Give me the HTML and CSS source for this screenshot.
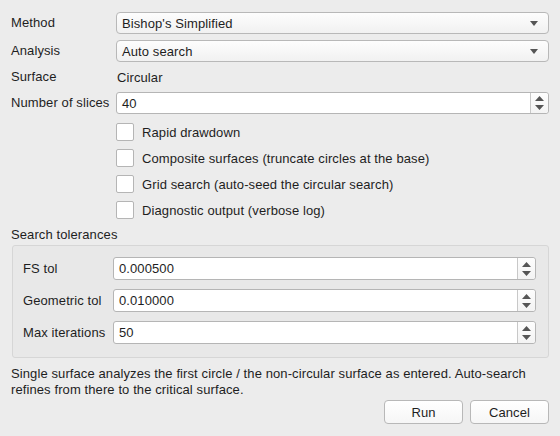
FILE: index.html
```html
<!DOCTYPE html>
<html lang="en">
<head>
    <meta charset="UTF-8">
    <title>Slope Stability Analysis</title>
    <link rel="stylesheet" href="styles.css">
</head>
<body>
    <div class="dialog">
        <div class="form">
            <label class="label">Method</label>
            <div class="combo">
                <span>Bishop's Simplified</span>
                <svg class="combo-arrow" width="8" height="5" viewBox="0 0 8 5"><path d="M0 0h8L4 5z" fill="#555"/></svg>
            </div>

            <label class="label">Analysis</label>
            <div class="combo">
                <span>Auto search</span>
                <svg class="combo-arrow" width="8" height="5" viewBox="0 0 8 5"><path d="M0 0h8L4 5z" fill="#555"/></svg>
            </div>

            <label class="label">Surface</label>
            <div class="value">Circular</div>

            <label class="label">Number of slices</label>
            <div class="spin">
                <span class="spin-text">40</span>
                <div class="spin-buttons">
                    <svg width="9" height="14" viewBox="0 0 9 14"><path d="M0 5L4.5 0L9 5z M0 9h9L4.5 14z" fill="#555"/></svg>
                </div>
            </div>
        </div>

        <div class="checks">
            <div class="check"><span class="box"></span>Rapid drawdown</div>
            <div class="check"><span class="box"></span>Composite surfaces (truncate circles at the base)</div>
            <div class="check"><span class="box"></span>Grid search (auto-seed the circular search)</div>
            <div class="check"><span class="box"></span>Diagnostic output (verbose log)</div>
        </div>

        <div class="group-title">Search tolerances</div>
        <div class="group">
            <label class="label">FS tol</label>
            <div class="spin">
                <span class="spin-text">0.000500</span>
                <div class="spin-buttons">
                    <svg width="9" height="14" viewBox="0 0 9 14"><path d="M0 5L4.5 0L9 5z M0 9h9L4.5 14z" fill="#555"/></svg>
                </div>
            </div>

            <label class="label">Geometric tol</label>
            <div class="spin">
                <span class="spin-text">0.010000</span>
                <div class="spin-buttons">
                    <svg width="9" height="14" viewBox="0 0 9 14"><path d="M0 5L4.5 0L9 5z M0 9h9L4.5 14z" fill="#555"/></svg>
                </div>
            </div>

            <label class="label">Max iterations</label>
            <div class="spin">
                <span class="spin-text">50</span>
                <div class="spin-buttons">
                    <svg width="9" height="14" viewBox="0 0 9 14"><path d="M0 5L4.5 0L9 5z M0 9h9L4.5 14z" fill="#555"/></svg>
                </div>
            </div>
        </div>

        <p class="note">Single surface analyzes the first circle / the non-circular surface as entered. Auto-search<br>refines from there to the critical surface.</p>

        <div class="buttons">
            <button class="btn">Run</button>
            <button class="btn">Cancel</button>
        </div>
    </div>
</body>
</html>
```

FILE: styles.css
```css
html, body {
    margin: 0;
    height: 100%;
}

body {
    font-family: "Liberation Sans", Arial, sans-serif;
    font-size: 13px;
    letter-spacing: 0.1px;
    background-color: #ececec;
    color: #1e1e1e;
}

.dialog {
    padding: 12px 11px 0 11px;
}

/* Top form */
.form {
    display: grid;
    grid-template-columns: 105px 1fr;
    grid-template-rows: 22px 22px 18px 22px;
    row-gap: 6px;
    align-items: center;
}

.label {
    line-height: 16px;
    white-space: nowrap;
}

.value {
    padding-left: 1px;
}

.combo {
    height: 22px;
    box-sizing: border-box;
    display: flex;
    align-items: center;
    justify-content: space-between;
    padding: 0 10px 0 5px;
    border: 1px solid #b8b8b8;
    border-radius: 4px;
    background: linear-gradient(#fdfdfd, #f1f1f1);
}

.combo-arrow {
    display: block;
}

/* Spin boxes */
.spin {
    height: 22px;
    box-sizing: border-box;
    display: flex;
    align-items: stretch;
    border: 1px solid #b5b5b5;
    border-radius: 3px;
    background: #fff;
}

.spin-text {
    flex: 1;
    display: flex;
    align-items: center;
    padding-left: 5px;
}

.spin-buttons {
    width: 17px;
    border-left: 1px solid #c8c8c8;
    display: flex;
    align-items: center;
    justify-content: center;
    background: linear-gradient(#fdfdfd, #f3f3f3);
    border-radius: 0 3px 3px 0;
}

.spin-buttons svg {
    display: block;
}

/* Check boxes */
.checks {
    display: flex;
    flex-direction: column;
    gap: 8px;
    margin-top: 9px;
    padding-left: 105px;
}

.check {
    display: flex;
    align-items: center;
    height: 18px;
}

.box {
    width: 16px;
    height: 16px;
    border: 1px solid #b5b5b5;
    border-radius: 2px;
    background: #fff;
    margin-right: 8px;
}

/* Group box */
.group-title {
    margin-top: 8px;
    line-height: 16px;
}

.group {
    margin: 2px 0 0 1px;
    border: 1px solid #d6d6d6;
    border-radius: 3px;
    background-color: #e8e8e8;
    padding: 11px 12px 13px 10px;
    display: grid;
    grid-template-columns: 90px 1fr;
    grid-template-rows: 23px 23px 23px;
    row-gap: 9px;
    align-items: center;
}

.group .spin {
    height: 23px;
}

.note {
    margin: 8px 0 0 0;
    line-height: 16px;
}

.buttons {
    display: flex;
    justify-content: flex-end;
    gap: 7px;
    margin-top: 2px;
}

.btn {
    width: 79px;
    height: 24px;
    font-family: inherit;
    font-size: 13px;
    letter-spacing: 0.1px;
    color: #1e1e1e;
    border: 1px solid #b8b8b8;
    border-radius: 4px;
    background: linear-gradient(#ffffff, #f6f6f6);
    padding: 0;
}
```
